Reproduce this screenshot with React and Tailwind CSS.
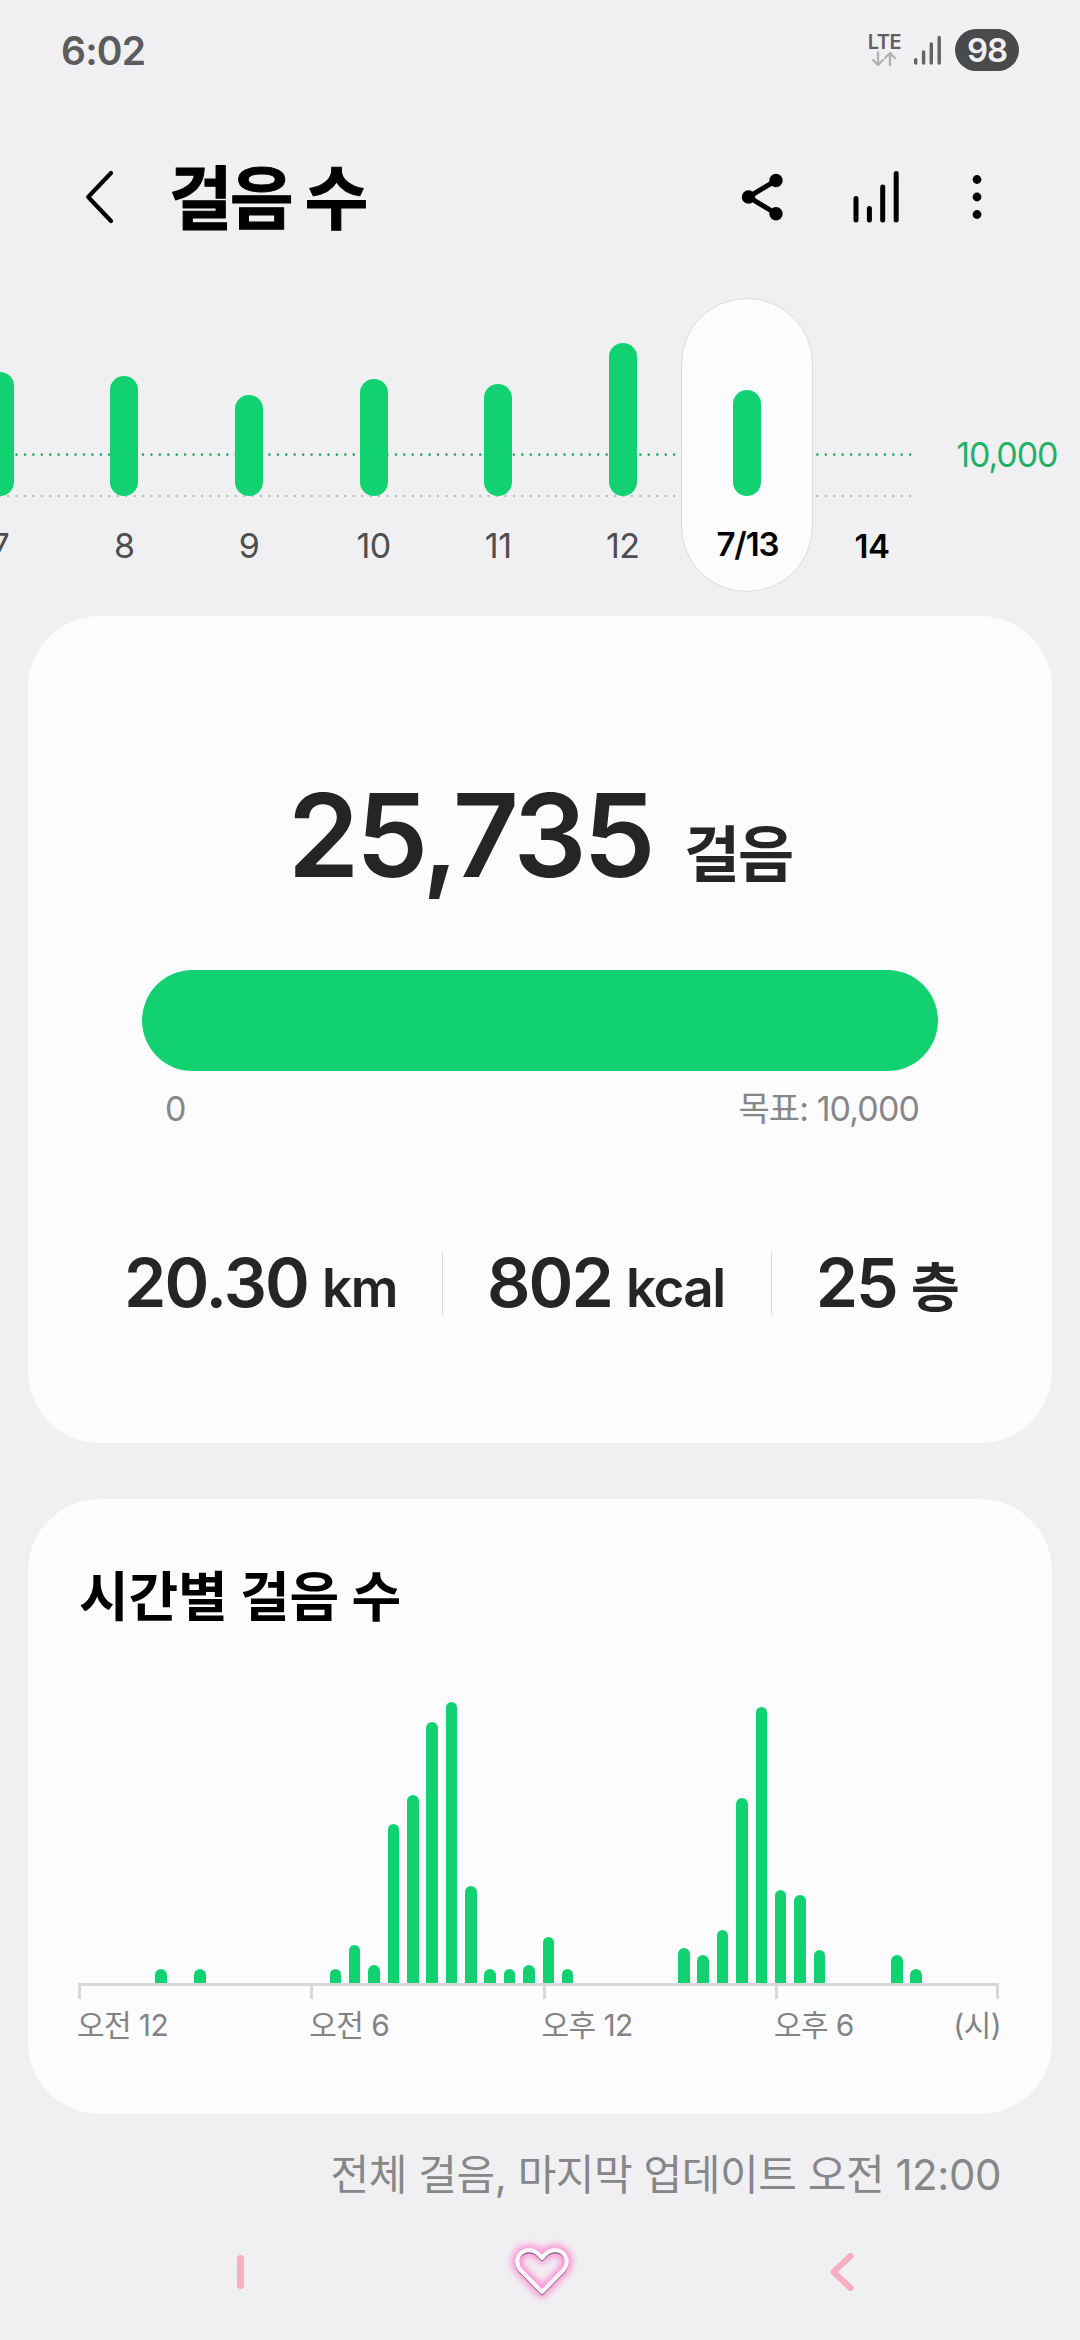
import React from 'react';

const days = [
    { label: '7', height: 124 },
    { label: '8', height: 120 },
    { label: '9', height: 101 },
    { label: '10', height: 117 },
    { label: '11', height: 112 },
    { label: '12', height: 153 },
    { label: '7/13', height: 106, selected: true },
    { label: '14', height: 0, future: true }
];

// one value per half hour
const hourly = [
    0, 0, 0, 0, 14, 0, 14, 0, 0, 0, 0, 0,
    0, 14, 38, 18, 159, 188, 261, 281, 97, 14, 14, 18,
    46, 14, 0, 0, 0, 0, 0, 35, 28, 53, 185, 276,
    93, 88, 33, 0, 0, 0, 28, 14, 0, 0, 0, 0
];

function StatusBar() {
    return (
        <div className="flex h-[100px] items-center justify-between pl-[61px] pr-[61px]">
            <span className="text-[39px] font-semibold leading-none tracking-[-0.800px] text-[#5c5c5e]">6:02</span>
            <div className="flex items-center">
                <div className="flex flex-col items-center">
                    <span className="text-[20px] font-semibold leading-[18px] tracking-[-0.500px] text-[#5f5f61]">LTE</span>
                    <svg width="26" height="16" viewBox="0 0 26 16" fill="none" stroke="#b4b4b6" strokeWidth="2.4" strokeLinecap="round" strokeLinejoin="round">
                        <path d="M7 1.5v12M2 9l5 5 5-5M19 14V2M14 7l5-5 5 5" />
                    </svg>
                </div>
                <svg className="ml-3" width="28" height="30" viewBox="0 0 28 30" stroke="#646466" strokeWidth="3.4" strokeLinecap="round">
                    <path d="M2.7 24.700V28M10.600 17v11M18.300 9v19M26.200 2.500V28" />
                </svg>
                <span className="ml-[14px] flex h-[42px] w-16 items-center justify-center rounded-full bg-[#4a4a4c] text-[33px] font-semibold leading-none tracking-[-1.200px] text-[#f0f0f2]">98</span>
            </div>
        </div>
    );
}

function Header() {
    return (
        <header className="flex h-[194px] items-center pl-[84px] pr-[98px]">
            <svg width="30" height="56" viewBox="0 0 30 56" fill="none" stroke="#000" strokeWidth="4.2" strokeLinecap="round" strokeLinejoin="round">
                <path d="M27 4L4.200 28L27 52" />
            </svg>
            <h1 className="ml-[55px] flex-1 pt-[5px] text-[69px] font-bold leading-none tracking-[-2.500px] text-black [-webkit-text-stroke:1px_#000]">걸음 수</h1>
            <svg width="42" height="50" viewBox="0 0 42 50" stroke="#000" strokeWidth="5">
                <path d="M35 8.500L7.500 25L35 41.700" fill="none" />
                <circle cx="35" cy="8.500" r="4.200" />
                <circle cx="7.500" cy="25" r="4.200" />
                <circle cx="35" cy="41.700" r="4.200" />
            </svg>
            <svg className="ml-[70px]" width="46" height="54" viewBox="0 0 46 54" stroke="#000" strokeWidth="5" strokeLinecap="round">
                <path d="M3 28.500V50M16.400 38.500V50M29.700 17V50M43.200 3.500V50" />
            </svg>
            <svg className="ml-[73px]" width="10" height="46" viewBox="0 0 10 46">
                <circle cx="5" cy="5.500" r="4.400" />
                <circle cx="5" cy="23" r="4.400" />
                <circle cx="5" cy="40.500" r="4.400" />
            </svg>
        </header>
    );
}

function DayColumn({ day }) {
    if (day.selected) {
        return (
            <div className="-mx-[3.7px] flex h-[294px] w-[132px] shrink-0 flex-col items-center rounded-full border border-[#dcdcde] bg-[#fcfcfe]">
                <div className="flex h-[197px] items-end">
                    <div className="w-7 rounded-full bg-[#12d170]" style={{ height: day.height }}></div>
                </div>
                <span className="mt-[31px] text-[33px] font-semibold leading-[34px] tracking-[-1.200px] text-black">{day.label}</span>
            </div>
        );
    }
    return (
        <div className="flex h-[294px] w-[124.600px] shrink-0 flex-col items-center">
            <div className="flex h-[198px] items-end">
                <div className="w-7 rounded-full bg-[#12d170]" style={{ height: day.height }}></div>
            </div>
            <span className={day.future ? 'mt-[33px] text-[33px] font-semibold leading-[34px] tracking-[-0.500px] text-black' : 'mt-[33px] text-[34px] leading-[34px] tracking-[-0.500px] text-[#4e4e50]'}>{day.label}</span>
        </div>
    );
}

function WeekChart() {
    return (
        <section className="relative mt-1 h-[294px] overflow-hidden">
            {/* Goal and base lines */}
            <svg className="absolute left-0 top-0" width="920" height="294" viewBox="0 0 920 294" strokeWidth="2.600" strokeLinecap="round" strokeDasharray="0 8.430">
                <path d="M-0.300 156.600H912" stroke="#26a465" />
                <path d="M-0.300 198H912" stroke="#bdbdbf" />
            </svg>
            <div className="relative ml-[-62.500px] flex">
                {days.map((day) => <DayColumn key={day.label} day={day} />)}
                <span className="ml-[22px] mt-[140px] text-[34px] leading-[34px] tracking-[-1.100px] text-[#1fb268]">10,000</span>
            </div>
        </section>
    );
}

function Stat({ value, unit }) {
    return (
        <div className="flex items-baseline pt-1 text-[#252527]">
            <span className="text-[68px] font-semibold leading-[80px] tracking-[-1.900px]">{value}</span>
            <span className="ml-[14px] text-[53px] font-semibold leading-[80px] tracking-[-1.500px]">{unit}</span>
        </div>
    );
}

function SummaryCard() {
    return (
        <section className="mx-7 mt-6 h-[827px] rounded-[72px] bg-[#fcfcfe] pt-[150px]">
            <div className="flex h-[140px] items-baseline justify-center text-[#252527]">
                <span className="text-[115px] font-semibold leading-[140px] tracking-[-3.500px]">25,735</span>
                <span className="ml-[32px] text-[61px] font-bold leading-[140px] tracking-[-2px]">걸음</span>
            </div>
            <div className="mx-[114px] mt-[64px] h-[101px] rounded-full bg-[#12d170]"></div>
            <div className="mx-[133px] mt-[18px] flex h-[40px] items-center justify-between pl-[4px] text-[34px] leading-[40px] tracking-[-0.900px] text-[#878789]">
                <span>0</span>
                <span>목표: 10,000</span>
            </div>
            <div className="mt-[114px] flex h-[80px] items-center pl-[96px]">
                <Stat value="20.30" unit="km" />
                <div className="ml-[45px] mr-[44px] h-16 w-px bg-[#dadadc]"></div>
                <Stat value="802" unit="kcal" />
                <div className="ml-[46px] mr-[44px] h-16 w-px bg-[#dadadc]"></div>
                <Stat value="25" unit="층" />
            </div>
        </section>
    );
}

function HourlyCard() {
    return (
        <section className="mx-7 mt-14 h-[615px] rounded-[72px] bg-[#fcfcfe] pt-[69px]">
            <h2 className="ml-[51px] h-[60px] text-[54px] font-bold leading-[60px] tracking-[-0.200px] text-black">시간별 걸음 수</h2>
            <div className="ml-[46px] mt-[55px] flex h-[300px] w-[929px] items-end">
                {hourly.map((value, i) => (
                    <div key={i} className="flex flex-1 justify-center">
                        <div className="w-[11.500px] rounded-t-full bg-[#12d170]" style={{ height: value }}></div>
                    </div>
                ))}
            </div>
            <div className="ml-[50px] flex h-4 w-[921px] border-t-[3px] border-r-[3px] border-[#d8d8da]">
                <div className="w-[232.300px] border-l-[3px] border-[#d8d8da]"></div>
                <div className="w-[232.300px] border-l-[3px] border-[#d8d8da]"></div>
                <div className="w-[232.300px] border-l-[3px] border-[#d8d8da]"></div>
                <div className="border-l-[3px] border-[#d8d8da]"></div>
            </div>
            <div className="ml-[49px] mt-[6px] flex h-[40px] w-[924px] text-[30px] leading-[40px] tracking-[-0.600px] text-[#838385]">
                <span className="w-[232.300px]">오전 12</span>
                <span className="w-[232.300px]">오전 6</span>
                <span className="w-[232.300px]">오후 12</span>
                <span className="flex-1">오후 6</span>
                <span>(시)</span>
            </div>
        </section>
    );
}

function NavBar() {
    return (
        <nav className="mt-[17px] flex h-[100px] items-center pl-[237px]">
            <div className="h-[34px] w-[7px] rounded-full bg-[#f9afc1]"></div>
            <svg className="ml-[256px]" width="84" height="84" viewBox="0 0 84 84" fill="none" strokeLinecap="round" strokeLinejoin="round">
                <defs>
                    <filter id="glow" x="-30%" y="-30%" width="160%" height="160%">
                        <feGaussianBlur stdDeviation="3.500" />
                    </filter>
                    <filter id="shade" x="-30%" y="-30%" width="160%" height="160%">
                        <feGaussianBlur stdDeviation="0.700" />
                    </filter>
                </defs>
                <path d="M42 62L21 40.500C15 34 16.500 23 26 20.500C33 19 38 22.500 42 28C46 22.500 51 19 58 20.500C67.500 23 69 34 63 40.500Z" stroke="#fb8fd3" strokeWidth="11" filter="url(#glow)" />
                <path d="M42 63.500L21 42C15 35.500 16.500 24.500 26 22C33 20.500 38 24 42 29.500C46 24 51 20.500 58 22C67.500 24.500 69 35.500 63 42Z" stroke="#75606f" strokeWidth="3.500" filter="url(#shade)" />
                <path d="M42 62L21 40.500C15 34 16.500 23 26 20.500C33 19 38 22.500 42 28C46 22.500 51 19 58 20.500C67.500 23 69 34 63 40.500Z" stroke="#fff5fd" strokeWidth="4.200" />
            </svg>
            <svg className="ml-[245px]" width="26" height="40" viewBox="0 0 26 40" fill="none" stroke="#f9afc1" strokeWidth="6" strokeLinecap="round" strokeLinejoin="round">
                <path d="M21.500 4L4.500 20L21.500 36" />
            </svg>
        </nav>
    );
}

export default function App() {
    return (
        <div className="h-[2340px] w-[1080px] overflow-hidden bg-[#f0f0f2] font-['Inter','Noto_Sans_CJK_KR',sans-serif]">
            <StatusBar />
            <Header />
            <WeekChart />
            <SummaryCard />
            <HourlyCard />
            <p className="mr-[79px] mt-[31px] h-[60px] text-right text-[42px] leading-[60px] tracking-[-0.450px] text-[#878789]">전체 걸음, 마지막 업데이트 오전 12:00</p>
            <NavBar />
        </div>
    );
}
